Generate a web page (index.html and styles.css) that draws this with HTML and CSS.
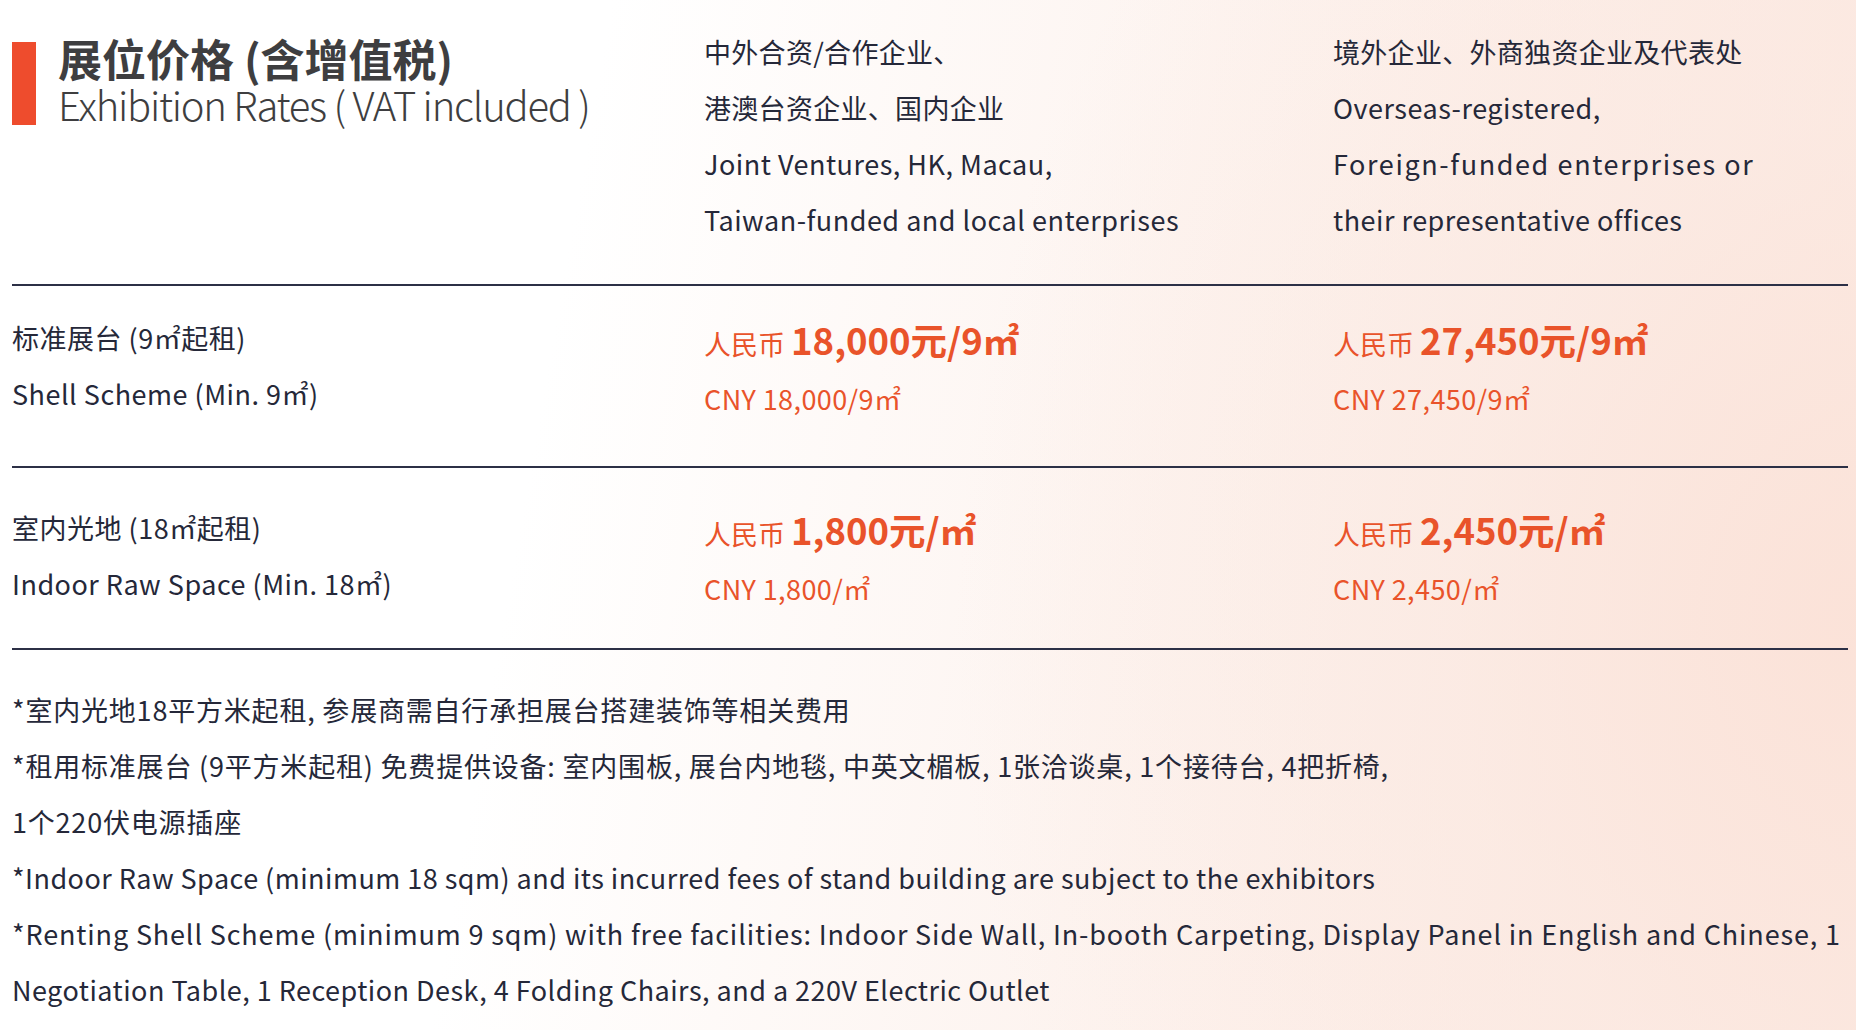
FILE: index.html
```html
<!DOCTYPE html>
<html lang="zh-CN">
<head>
<meta charset="utf-8">
<title>展位价格</title>
<link rel="stylesheet" href="styles.css">
</head>
<body>
<main class="page">
  <section class="row header">
    <div class="title">
      <div class="title-bar"></div>
      <div class="title-text">
        <div class="title-cn">展位价格 (含增值税)</div>
        <div class="title-en">Exhibition Rates ( VAT included )</div>
      </div>
    </div>
    <div class="cell">
      <p class="cn">中外合资/合作企业、</p>
      <p class="cn">港澳台资企业、国内企业</p>
      <p>Joint Ventures, HK, Macau,</p>
      <p>Taiwan-funded and local enterprises</p>
    </div>
    <div class="cell">
      <p class="cn">境外企业、外商独资企业及代表处</p>
      <p>Overseas-registered,</p>
      <p class="stretch">Foreign-funded enterprises or</p>
      <p>their representative offices</p>
    </div>
  </section>

  <section class="row item first">
    <div class="cell">
      <p>标准展台 (9㎡起租)</p>
      <p>Shell Scheme (Min. 9㎡)</p>
    </div>
    <div class="cell price">
      <p class="rmb">人民币 <b>18,000元/9㎡</b></p>
      <p class="cny">CNY 18,000/9㎡</p>
    </div>
    <div class="cell price">
      <p class="rmb">人民币 <b>27,450元/9㎡</b></p>
      <p class="cny">CNY 27,450/9㎡</p>
    </div>
  </section>

  <section class="row item second">
    <div class="cell">
      <p>室内光地 (18㎡起租)</p>
      <p>Indoor Raw Space (Min. 18㎡)</p>
    </div>
    <div class="cell price">
      <p class="rmb">人民币 <b>1,800元/㎡</b></p>
      <p class="cny">CNY 1,800/㎡</p>
    </div>
    <div class="cell price">
      <p class="rmb">人民币 <b>2,450元/㎡</b></p>
      <p class="cny">CNY 2,450/㎡</p>
    </div>
  </section>

  <section class="notes">
    <p class="cn">*室内光地18平方米起租, 参展商需自行承担展台搭建装饰等相关费用</p>
    <p class="cn">*租用标准展台 (9平方米起租) 免费提供设备: 室内围板, 展台内地毯, 中英文楣板, 1张洽谈桌, 1个接待台, 4把折椅,</p>
    <p class="cn">1个220伏电源插座</p>
    <p>*Indoor Raw Space (minimum 18 sqm) and its incurred fees of stand building are subject to the exhibitors</p>
    <p class="stretch">*Renting Shell Scheme (minimum 9 sqm) with free facilities: Indoor Side Wall, In-booth Carpeting, Display Panel in English and Chinese, 1</p>
    <p>Negotiation Table, 1 Reception Desk, 4 Folding Chairs, and a 220V Electric Outlet</p>
  </section>
</main>
</body>
</html>
```

FILE: styles.css
```css
* { box-sizing: border-box; }

html, body {
  margin: 0;
  padding: 0;
}

body {
  width: 1856px;
  height: 1030px;
  overflow: hidden;
  font-family: "Noto Sans CJK SC", "Noto Sans", sans-serif;
  color: #252839;
  background:
    radial-gradient(ellipse 900px 1100px at 100% 60%, rgba(251, 226, 216, 0.95) 0%, rgba(251, 232, 224, 0.6) 45%, rgba(255, 255, 255, 0) 100%),
    linear-gradient(100deg, #ffffff 0%, #ffffff 30%, #fdf4f0 60%, #fbe7df 100%);
}

.page {
  padding: 0 8px 0 12px;
}

p { margin: 0; }

.row {
  display: grid;
  grid-template-columns: 692px 629px 1fr;
  border-bottom: 2px solid #2c3046;
}

.header {
  padding: 24px 0 36px;
  height: 286px;
}

.title {
  display: flex;
  align-items: flex-start;
  gap: 22px;
  padding-top: 10px;
}

.title-bar {
  width: 24px;
  height: 83px;
  margin-top: 8px;
  background: #ee4c2d;
  flex: none;
}

.title-text {
  color: #3e3e40;
}

.title-cn {
  font-size: 44px;
  font-weight: 700;
  line-height: 48px;
  white-space: nowrap;
}

.title-en {
  font-size: 40px;
  font-weight: 300;
  line-height: 44px;
  letter-spacing: -1.25px;
  white-space: nowrap;
}

.cell p {
  font-size: 27px;
  line-height: 56px;
  letter-spacing: 0.5px;
  white-space: nowrap;
}

.cell p.cn {
  letter-spacing: 0.3px;
}

.cell p.stretch {
  letter-spacing: 1.6px;
}

.item {
  height: 182px;
}

.item.first {
  padding-top: 24px;
}

.item.second {
  padding-top: 32px;
}

.price {
  color: #e9532a;
}

.price .rmb {
  line-height: 60px;
  font-size: 27px;
  letter-spacing: 0;
}

.price .rmb b {
  font-size: 36.5px;
  font-weight: 700;
}

.cell.price .cny {
  font-size: 27px;
  line-height: 49px;
  letter-spacing: 0.4px;
}

.notes {
  padding-top: 32px;
}

.notes p {
  font-size: 27px;
  line-height: 56px;
  letter-spacing: 0.47px;
  white-space: nowrap;
}

.notes p.cn {
  letter-spacing: 0.8px;
}

.notes p.stretch {
  letter-spacing: 0.85px;
}
```
